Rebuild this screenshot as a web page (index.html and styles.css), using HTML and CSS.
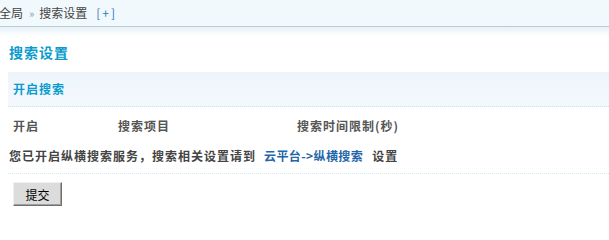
FILE: index.html
```html
<!DOCTYPE html>
<html lang="zh-CN">
<head>
<meta charset="utf-8">
<title>搜索设置</title>
<link rel="stylesheet" href="styles.css">
</head>
<body>
<div class="topbar">
  <div class="crumbs"><span>全局</span><span class="sep">»</span><span>搜索设置</span><a class="plus" href="#">[+]</a></div>
</div>
<div class="shade"></div>
<div class="main">
  <h3 class="title">搜索设置</h3>
  <div class="section">开启搜索</div>
  <div class="cols">
    <span class="c1">开启</span>
    <span class="c2">搜索项目</span>
    <span class="c3">搜索时间限制(秒)</span>
  </div>
  <div class="note"><span>您已开启纵横搜索服务，搜索相关设置请到</span><a href="#" class="link">云平台-&gt;纵横搜索</a><span>设置</span></div>
  <div class="actions"><button class="btn" type="button">提交</button></div>
</div>
</body>
</html>
```

FILE: styles.css
```css
html, body {
  margin: 0;
  padding: 0;
  background: #fff;
  font-family: "Noto Sans CJK SC", "DejaVu Sans", sans-serif;
  font-size: 12px;
  color: #333;
}
a { text-decoration: none; }

.topbar {
  height: 26px;
  background: #f2f9fd;
  border-bottom: 1px solid #b8cdd6;
  display: flex;
  align-items: center;
}
.crumbs {
  display: flex;
  align-items: center;
  color: #444;
  font-size: 12px;
  line-height: 26px;
  margin-left: -1px;
}
.sep { color: #7a9cb0; font-size: 11px; margin: 0 5px 0 6px; }
.plus { color: #2b7bbd; margin-left: 9px; letter-spacing: 2px; }

.shade {
  height: 9px;
  background: linear-gradient(#e6f1f6, #ffffff);
}

.main { padding: 0 0 0 8px; }

.title {
  margin: 0;
  padding: 4px 0 0 1px;
  height: 25px;
  line-height: 24px;
  font-size: 14px;
  font-weight: bold;
  letter-spacing: 1px;
  color: #0a9bcd;
}

.section {
  margin-top: 7px;
  height: 34px;
  line-height: 34px;
  padding-left: 5px;
  background: linear-gradient(#edf5fc, #f3f8fd);
  border-bottom: 1px dotted #c8e0ee;
  color: #0a9bcd;
  font-weight: bold;
  letter-spacing: 1px;
}

.cols {
  display: flex;
  height: 37px;
  align-items: center;
  padding-left: 5px;
  color: #555;
  font-weight: bold;
  letter-spacing: 1px;
}
.c1 { width: 105px; }
.c2 { width: 179px; }

.note {
  display: flex;
  padding-left: 1px;
  height: 29px;
  line-height: 24px;
  color: #444;
  font-weight: bold;
  letter-spacing: 1px;
  border-bottom: 1px dotted #cfe8f2;
}
.link { color: #2366a8; margin: 0 9px 0 8px; letter-spacing: 0.4px; }

.actions { padding: 8px 0 0 5px; }
.btn {
  width: 49px;
  height: 24px;
  padding: 0;
  font-family: "Noto Sans CJK SC", sans-serif;
  font-size: 12px;
  color: #000;
  background: #dcdcdc;
  border: 1px solid;
  border-color: #f0f0f0 #707070 #707070 #f0f0f0;
  box-shadow: inset -1px -1px 0 #a0a0a0;
}
```
